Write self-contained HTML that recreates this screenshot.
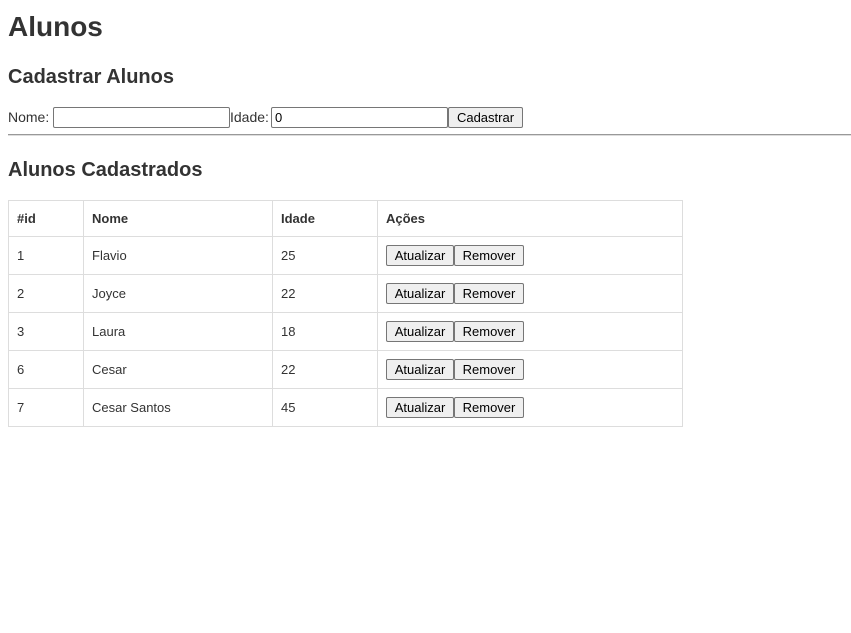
<!DOCTYPE html><html><head><style>
body{margin:0;width:851px;height:633px;background:#fff;font-family:"Liberation Sans",sans-serif;color:#333;font-size:14px;position:relative}
.a{position:absolute;white-space:nowrap}
h1,h2{margin:0;font-weight:bold}
input{position:absolute;box-sizing:border-box;height:21px;border:1px solid #767676;border-radius:2px;font:13px "Liberation Sans",sans-serif;padding:1px 3px;margin:0}
button{position:absolute;box-sizing:border-box;height:21px;border:1px solid #767676;border-radius:2px;background:#efefef;font:13px "Liberation Sans",sans-serif;color:#000;padding:0;margin:0}
table{position:absolute;left:8px;top:200px;border-collapse:collapse;width:675px}
td,th{border:1px solid #ddd;padding:0 8px;text-align:left;font-size:13px;position:relative}
th{font-weight:bold;height:35px}
td{height:37px}
</style></head><body>
<h1 class="a" style="left:8px;top:11px;font-size:28px">Alunos</h1>
<h2 class="a" style="left:8px;top:66px;font-size:20px">Cadastrar Alunos</h2>
<span class="a" style="left:8px;top:109px">Nome:</span>
<input style="left:53px;top:107px;width:177px">
<span class="a" style="left:230px;top:109px">Idade:</span>
<input style="left:271px;top:107px;width:177px" value="0">
<button style="left:448px;top:107px;width:75px">Cadastrar</button>
<div class="a" style="left:8px;top:134px;width:843px;border-top:1px solid #999;border-bottom:1px solid #ddd"></div>
<h2 class="a" style="left:8px;top:159px;font-size:20px">Alunos Cadastrados</h2>
<table>
<tr><th style="width:58px">#id</th><th style="width:172px">Nome</th><th style="width:88px">Idade</th><th>Ações</th></tr>
<tr><td>1</td><td>Flavio</td><td>25</td><td><button style="left:8px;top:8px;width:68px">Atualizar</button><button style="left:76px;top:8px;width:70px">Remover</button></td></tr>
<tr><td>2</td><td>Joyce</td><td>22</td><td><button style="left:8px;top:8px;width:68px">Atualizar</button><button style="left:76px;top:8px;width:70px">Remover</button></td></tr>
<tr><td>3</td><td>Laura</td><td>18</td><td><button style="left:8px;top:8px;width:68px">Atualizar</button><button style="left:76px;top:8px;width:70px">Remover</button></td></tr>
<tr><td>6</td><td>Cesar</td><td>22</td><td><button style="left:8px;top:8px;width:68px">Atualizar</button><button style="left:76px;top:8px;width:70px">Remover</button></td></tr>
<tr><td>7</td><td>Cesar Santos</td><td>45</td><td><button style="left:8px;top:8px;width:68px">Atualizar</button><button style="left:76px;top:8px;width:70px">Remover</button></td></tr>
</table>
</body></html>
